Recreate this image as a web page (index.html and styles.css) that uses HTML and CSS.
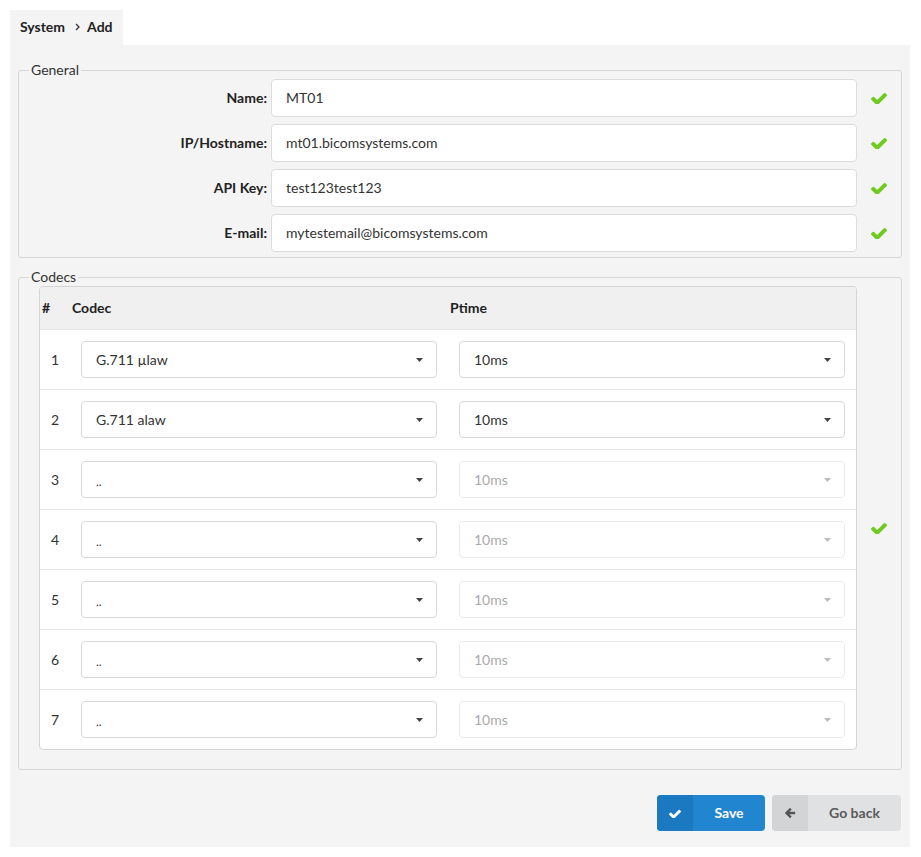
FILE: index.html
```html
<!DOCTYPE html>
<html lang="en">
<head>
<meta charset="utf-8">
<title>System - Add</title>
<link rel="stylesheet" href="styles.css">
</head>
<body>
<div class="crumb">
  <span>System</span>
  <svg class="chev" width="5" height="8" viewBox="0 0 5 8"><path d="M1 1 L4 4 L1 7" fill="none" stroke="#333" stroke-width="1.3"/></svg>
  <span>Add</span>
</div>
<div class="panel">
  <fieldset class="box general">
    <legend>General</legend>
    <div class="frow">
      <label class="flabel">Name:</label>
      <input class="input" type="text" value="MT01">
      <div class="ok"><svg width="16" height="12" viewBox="121 270 1550 1116"><path d="M1671 566q0 40-28 68l-724 724-136 136q-28 28-68 28t-68-28l-136-136-362-362q-28-28-28-68t28-68l136-136q28-28 68-28t68 28l294 295 656-657q28-28 68-28t68 28l136 136q28 28 28 68z"/></svg></div>
    </div>
    <div class="frow">
      <label class="flabel">IP/Hostname:</label>
      <input class="input" type="text" value="mt01.bicomsystems.com">
      <div class="ok"><svg width="16" height="12" viewBox="121 270 1550 1116"><path d="M1671 566q0 40-28 68l-724 724-136 136q-28 28-68 28t-68-28l-136-136-362-362q-28-28-28-68t28-68l136-136q28-28 68-28t68 28l294 295 656-657q28-28 68-28t68 28l136 136q28 28 28 68z"/></svg></div>
    </div>
    <div class="frow">
      <label class="flabel">API Key:</label>
      <input class="input" type="text" value="test123test123">
      <div class="ok"><svg width="16" height="12" viewBox="121 270 1550 1116"><path d="M1671 566q0 40-28 68l-724 724-136 136q-28 28-68 28t-68-28l-136-136-362-362q-28-28-28-68t28-68l136-136q28-28 68-28t68 28l294 295 656-657q28-28 68-28t68 28l136 136q28 28 28 68z"/></svg></div>
    </div>
    <div class="frow">
      <label class="flabel">E-mail:</label>
      <input class="input" type="text" value="mytestemail@bicomsystems.com">
      <div class="ok"><svg width="16" height="12" viewBox="121 270 1550 1116"><path d="M1671 566q0 40-28 68l-724 724-136 136q-28 28-68 28t-68-28l-136-136-362-362q-28-28-28-68t28-68l136-136q28-28 68-28t68 28l294 295 656-657q28-28 68-28t68 28l136 136q28 28 28 68z"/></svg></div>
    </div>
  </fieldset>

  <fieldset class="box codecs">
    <legend>Codecs</legend>
    <div class="codec-wrap">
      <div class="table">
        <div class="thead">
          <div class="th">#</div>
          <div class="th">Codec</div>
          <div class="th">Ptime</div>
        </div>
        <div class="tr">
          <div class="td num">1</div>
          <div class="td"><div class="select"><span>G.711 µlaw</span><svg width="7" height="4" viewBox="0 0 7 4"><path d="M0 0 H7 L3.5 4 Z"/></svg></div></div>
          <div class="td"><div class="select"><span>10ms</span><svg width="7" height="4" viewBox="0 0 7 4"><path d="M0 0 H7 L3.5 4 Z"/></svg></div></div>
        </div>
        <div class="tr">
          <div class="td num">2</div>
          <div class="td"><div class="select"><span>G.711 alaw</span><svg width="7" height="4" viewBox="0 0 7 4"><path d="M0 0 H7 L3.5 4 Z"/></svg></div></div>
          <div class="td"><div class="select"><span>10ms</span><svg width="7" height="4" viewBox="0 0 7 4"><path d="M0 0 H7 L3.5 4 Z"/></svg></div></div>
        </div>
        <div class="tr">
          <div class="td num">3</div>
          <div class="td"><div class="select"><span class="dots">..</span><svg width="7" height="4" viewBox="0 0 7 4"><path d="M0 0 H7 L3.5 4 Z"/></svg></div></div>
          <div class="td"><div class="select disabled"><span>10ms</span><svg width="7" height="4" viewBox="0 0 7 4"><path d="M0 0 H7 L3.5 4 Z"/></svg></div></div>
        </div>
        <div class="tr">
          <div class="td num">4</div>
          <div class="td"><div class="select"><span class="dots">..</span><svg width="7" height="4" viewBox="0 0 7 4"><path d="M0 0 H7 L3.5 4 Z"/></svg></div></div>
          <div class="td"><div class="select disabled"><span>10ms</span><svg width="7" height="4" viewBox="0 0 7 4"><path d="M0 0 H7 L3.5 4 Z"/></svg></div></div>
        </div>
        <div class="tr">
          <div class="td num">5</div>
          <div class="td"><div class="select"><span class="dots">..</span><svg width="7" height="4" viewBox="0 0 7 4"><path d="M0 0 H7 L3.5 4 Z"/></svg></div></div>
          <div class="td"><div class="select disabled"><span>10ms</span><svg width="7" height="4" viewBox="0 0 7 4"><path d="M0 0 H7 L3.5 4 Z"/></svg></div></div>
        </div>
        <div class="tr">
          <div class="td num">6</div>
          <div class="td"><div class="select"><span class="dots">..</span><svg width="7" height="4" viewBox="0 0 7 4"><path d="M0 0 H7 L3.5 4 Z"/></svg></div></div>
          <div class="td"><div class="select disabled"><span>10ms</span><svg width="7" height="4" viewBox="0 0 7 4"><path d="M0 0 H7 L3.5 4 Z"/></svg></div></div>
        </div>
        <div class="tr">
          <div class="td num">7</div>
          <div class="td"><div class="select"><span class="dots">..</span><svg width="7" height="4" viewBox="0 0 7 4"><path d="M0 0 H7 L3.5 4 Z"/></svg></div></div>
          <div class="td"><div class="select disabled"><span>10ms</span><svg width="7" height="4" viewBox="0 0 7 4"><path d="M0 0 H7 L3.5 4 Z"/></svg></div></div>
        </div>
      </div>
      <div class="ok"><svg width="16" height="12" viewBox="121 270 1550 1116"><path d="M1671 566q0 40-28 68l-724 724-136 136q-28 28-68 28t-68-28l-136-136-362-362q-28-28-28-68t28-68l136-136q28-28 68-28t68 28l294 295 656-657q28-28 68-28t68 28l136 136q28 28 28 68z"/></svg></div>
    </div>
  </fieldset>

  <div class="actions">
    <button class="btn save" type="button">
      <span class="ico"><svg width="12" height="9" viewBox="121 270 1550 1116"><path d="M1671 566q0 40-28 68l-724 724-136 136q-28 28-68 28t-68-28l-136-136-362-362q-28-28-28-68t28-68l136-136q28-28 68-28t68 28l294 295 656-657q28-28 68-28t68 28l136 136q28 28 28 68z"/></svg></span>
      <span class="lbl">Save</span>
    </button>
    <button class="btn back" type="button">
      <span class="ico"><svg width="12" height="12" viewBox="0 0 12 12"><path d="M6 0.8 L0.8 6 L6 11.2 L7.7 9.5 L5.4 7.3 H11.2 V4.7 H5.4 L7.7 2.5 Z"/></svg></span>
      <span class="lbl">Go back</span>
    </button>
  </div>
</div>
</body>
</html>
```

FILE: styles.css
```css
* {
  box-sizing: border-box;
}

body {
  margin: 10px;
  background: #ffffff;
  font-family: Lato, "Open Sans", Arial, sans-serif;
  font-size: 14px;
  color: #333333;
}

.crumb {
  display: inline-flex;
  align-items: center;
  height: 35px;
  padding: 0 10px 2px 10px;
  background: #f4f4f4;
  font-weight: bold;
  color: #222222;
}

.crumb .chev {
  margin: 1px 7px 0 10px;
}

.panel {
  width: 900px;
  background: #f4f4f4;
  padding: 16px 8px 16px 8px;
}

.box {
  margin: 0;
  min-width: 0;
  border: 1px solid #d6d6d6;
  border-radius: 3px;
  padding: 0;
}

.box legend {
  margin-left: 10px;
  padding: 0 2px;
  line-height: 18px;
  font-size: 14px;
  color: #333333;
}

.general {
  padding-bottom: 5px;
}

.frow {
  display: flex;
  align-items: center;
  height: 38px;
  margin-bottom: 7px;
}

.frow:last-child {
  margin-bottom: 0;
}

.flabel {
  width: 248px;
  margin-right: 4px;
  padding-bottom: 2px;
  text-align: right;
  font-weight: bold;
  color: #222222;
}

.input {
  flex: 1;
  height: 38px;
  min-width: 0;
  margin: 0;
  padding: 0 14px 2px 14px;
  border: 1px solid #dcdcdc;
  border-radius: 4px;
  background: #ffffff;
  font-family: inherit;
  font-size: 14px;
  color: #333333;
  outline: none;
}

.ok {
  width: 44px;
  display: flex;
  align-items: center;
  justify-content: center;
  align-self: stretch;
}

.ok svg {
  fill: #6fcb1f;
}

.codecs {
  margin-top: 10px;
}

.codec-wrap {
  display: flex;
  padding-bottom: 19px;
}

.codec-wrap .ok {
  margin-bottom: -19px;
}

.table {
  flex: 1;
  margin-left: 20px;
  border: 1px solid #d4d4d5;
  border-radius: 4px;
  background: #ffffff;
  overflow: hidden;
}

.thead,
.tr {
  display: grid;
  grid-template-columns: 30px 378px 1fr;
  align-items: center;
}

.thead {
  height: 42px;
  background: #f0f0f0;
  padding-bottom: 2px;
}

.th {
  padding-left: 2px;
  font-weight: bold;
  color: #222222;
}

.tr {
  border-top: 1px solid #e6e6e6;
  height: 60px;
}

.td {
  padding: 0 11px;
}

.num {
  color: #333333;
}

.select {
  display: flex;
  align-items: center;
  justify-content: space-between;
  height: 37px;
  padding: 0 13px 0 14px;
  border: 1px solid #d9d9d9;
  border-radius: 4px;
  background: #ffffff;
  color: #333333;
}

.select span {
  padding-bottom: 1px;
}

.select svg {
  fill: #444444;
}

.select.disabled {
  border-color: #ebebeb;
  color: #aaaaaa;
}

.select.disabled svg {
  fill: #bbbbbb;
}

.select .dots {
  font-size: 12px;
  padding: 4px 0 0 0;
}

.actions {
  display: flex;
  justify-content: flex-end;
  gap: 7px;
  margin-top: 25px;
  padding-right: 1px;
}

.btn {
  display: inline-flex;
  align-items: stretch;
  height: 36px;
  padding: 0;
  border: none;
  border-radius: 4px;
  overflow: hidden;
  font-family: inherit;
  font-size: 14px;
  font-weight: bold;
  cursor: pointer;
}

.btn .ico {
  width: 36px;
  display: flex;
  align-items: center;
  justify-content: center;
}

.btn .lbl {
  flex: 1;
  display: flex;
  align-items: center;
  justify-content: center;
  padding-bottom: 1px;
}

.save {
  width: 108px;
  background: #2185d0;
  color: #ffffff;
}

.save .ico {
  background: #1b79c1;
}

.save .ico svg {
  fill: #ffffff;
}

.back {
  width: 129px;
  background: #e0e1e2;
  color: #5a5a5a;
}

.back .ico {
  background: #d3d4d5;
}

.back .ico svg {
  fill: #555555;
}
```
